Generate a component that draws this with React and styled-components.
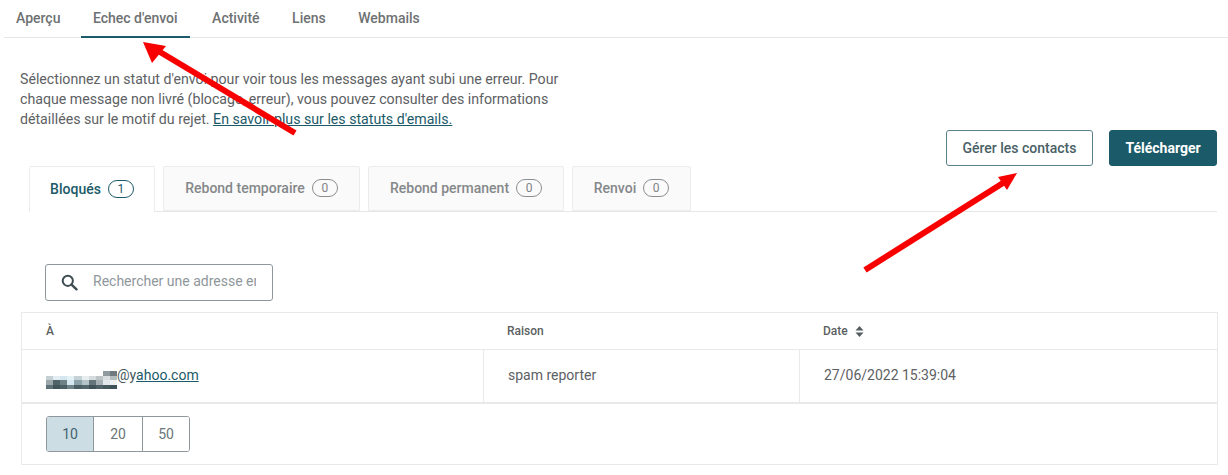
import React from 'react'
import styled, { createGlobalStyle } from 'styled-components'

const teal = '#1b5a68'

const GlobalStyle = createGlobalStyle`
    html, body {
        margin: 0;
        padding: 0;
        background: #fff;
    }
    body {
        font-family: Roboto, "Noto Sans", sans-serif;
        font-size: 14px;
        color: #5f6468;
    }
`

const navItems = ['Aperçu', "Echec d'envoi", 'Activité', 'Liens', 'Webmails']
const statusTabs = [
    { label: 'Bloqués', count: 1, width: 126 },
    { label: 'Rebond temporaire', count: 0, width: 197 },
    { label: 'Rebond permanent', count: 0, width: 196 },
    { label: 'Renvoi', count: 0, width: 119 },
]

// pixelated part of the address, [x, y, shade]
const mosaic = [
    [8, 0, '#8f9a9e'], [9, 0, '#6f7a80'],
    [0, 1, '#c4d0d4'], [1, 1, '#e2eef2'], [2, 1, '#d5e6ee'], [3, 1, '#e4f2f8'], [4, 1, '#c4d2d6'], [5, 1, '#e6eef0'], [6, 1, '#d6dcde'], [7, 1, '#bcc4c6'], [8, 1, '#d9dfe1'], [9, 1, '#b4bdc0'],
    [0, 2, '#9aa8ac'], [1, 2, '#4f6368'], [2, 2, '#6f8287'], [3, 2, '#d6e8f0'], [4, 2, '#8ba2a8'], [5, 2, '#b5c4c8'], [6, 2, '#64767b'], [7, 2, '#a6b0b4'], [8, 2, '#e2e8ea'], [9, 2, '#eef2f3'],
    [0, 3, '#5f7277'], [1, 3, '#3f555a'], [2, 3, '#4b6065'], [3, 3, '#6f8489'], [4, 3, '#4a5f64'], [5, 3, '#53686d'], [6, 3, '#3f5358'], [7, 3, '#4e6166'], [8, 3, '#45585d'], [9, 3, '#3f5257'],
]

function App() {
    return (
        <Page>
            <GlobalStyle />
            <Nav>
                {navItems.map((item, i) => (
                    <NavItem key={item} $active={i === 1}>{item}</NavItem>
                ))}
            </Nav>

            <Top>
                <Intro>
                    Sélectionnez un statut d'envoi pour voir tous les messages ayant subi une erreur. Pour
                    chaque message non livré (blocage, erreur), vous pouvez consulter des informations
                    détaillées sur le motif du rejet. <TextLink href="#">En savoir plus sur les statuts d'emails.</TextLink>
                </Intro>
                <Actions>
                    <OutlineButton>Gérer les contacts</OutlineButton>
                    <SolidButton>Télécharger</SolidButton>
                </Actions>
            </Top>

            <Tabs>
                {statusTabs.map((tab, i) => (
                    <Tab key={tab.label} $active={i === 0} $width={tab.width}>
                        {tab.label}
                        <Count $active={i === 0}>{tab.count}</Count>
                    </Tab>
                ))}
            </Tabs>

            <Search>
                <svg width="17" height="17" viewBox="0 0 18 18" fill="none" stroke="#3f4d52" strokeWidth="2.1">
                    <circle cx="7.2" cy="7.2" r="5.4" />
                    <path d="M11.2 11.2 L16.4 16.2" strokeLinecap="round" strokeWidth="2.6" />
                </svg>
                <SearchInput placeholder="Rechercher une adresse email" readOnly />
            </Search>

            <Table>
                <HeadRow>
                    <HeadCell>À</HeadCell>
                    <HeadCell>Raison</HeadCell>
                    <HeadCell>
                        Date
                        <svg width="9" height="11" viewBox="0 0 9 11" fill="#555d61">
                            <path d="M4.5 0 L8.5 4.4 H0.5 Z" />
                            <path d="M4.5 11 L8.5 6.6 H0.5 Z" />
                        </svg>
                    </HeadCell>
                </HeadRow>
                <BodyRow>
                    <BodyCell>
                        <Mosaic width="71" height="18" viewBox="0 0 10 4" preserveAspectRatio="none" shapeRendering="crispEdges">
                            {mosaic.map(([x, y, shade]) => (
                                <rect key={`${x}-${y}`} x={x} y={y} width="1" height="1" fill={shade} />
                            ))}
                        </Mosaic>
                        <Email>@y<EmailLink href="#">ahoo.com</EmailLink></Email>
                    </BodyCell>
                    <BodyCell>spam reporter</BodyCell>
                    <BodyCell>27/06/2022 15:39:04</BodyCell>
                </BodyRow>
                <Footer>
                    <Pager>
                        <PageButton $active $width={46}>10</PageButton>
                        <PageButton $width={49}>20</PageButton>
                        <PageButton $width={47}>50</PageButton>
                    </Pager>
                </Footer>
            </Table>

            {/* red annotation arrows drawn on top of the screenshot */}
            <Arrows width="1228" height="475" viewBox="0 0 1228 475">
                <path d="M295 133 L155 49" stroke="#f80000" strokeWidth="6" fill="none" />
                <path d="M143 42 L166 46 L152 63 Z" fill="#f80000" />
                <path d="M865 270 L1003 183" stroke="#f80000" strokeWidth="6" fill="none" />
                <path d="M1017 173 L998 177 L1007 190 Z" fill="#f80000" />
            </Arrows>
        </Page>
    )
}

export default App

const Page = styled.div`
    position: relative;
    width: 1228px;
    height: 475px;
    overflow: hidden;
    background: #fff;
`

const Nav = styled.nav`
    display: flex;
    gap: 8.5px;
    height: 38px;
    margin-left: 4px;
    box-sizing: border-box;
    border-bottom: 1px solid #e6e8e8;
`

const NavItem = styled.div`
    box-sizing: border-box;
    height: 38px;
    margin-right: ${(p) => (p.$active ? 2 : 0)}px;
    padding: 9px 12px 0;
    font-weight: 500;
    font-size: 14px;
    line-height: 18px;
    color: #6e7172;
    border-bottom: 2px solid ${(p) => (p.$active ? teal : 'transparent')};
`

const Top = styled.div`
    display: flex;
    align-items: flex-end;
    justify-content: space-between;
    height: 128px;
    padding: 0 11px 0 20px;
`

const Intro = styled.p`
    width: 550px;
    margin: 0 0 37px;
    font-size: 14.16px;
    line-height: 20px;
    color: #5d6163;
`

const TextLink = styled.a`
    color: ${teal};
    text-decoration: underline;
`

const Actions = styled.div`
    display: flex;
    gap: 16px;
`

const OutlineButton = styled.button`
    box-sizing: border-box;
    width: 147px;
    height: 36px;
    background: #fff;
    border: 1px solid #5b8089;
    border-radius: 3px;
    font: 500 14px Roboto, sans-serif;
    color: #4a5f66;
`

const SolidButton = styled.button`
    box-sizing: border-box;
    width: 108px;
    height: 36px;
    background: ${teal};
    border: 1px solid ${teal};
    border-radius: 3px;
    font: 700 14px Roboto, sans-serif;
    color: #fff;
`

const Tabs = styled.div`
    display: flex;
    gap: 8px;
    height: 46px;
    box-sizing: border-box;
    margin: 0 11px 0 29px;
    border-bottom: 1px solid #e6e8e8;
`

const Tab = styled.div`
    box-sizing: border-box;
    display: flex;
    align-items: center;
    justify-content: center;
    gap: 7px;
    width: ${(p) => p.$width}px;
    height: ${(p) => (p.$active ? 46 : 45)}px;
    padding-bottom: 1px;
    background: ${(p) => (p.$active ? '#fff' : '#fafafa')};
    border: 1px solid #ececec;
    border-bottom: ${(p) => (p.$active ? 'none' : '1px solid #ececec')};
    border-radius: 2px 2px 0 0;
    font-weight: 500;
    font-size: 14px;
    color: ${(p) => (p.$active ? teal : '#85888a')};
`

const Count = styled.span`
    box-sizing: border-box;
    width: 26px;
    height: 18px;
    border: 1px solid ${(p) => (p.$active ? teal : '#8b8e90')};
    border-radius: 9px;
    font-weight: 400;
    font-size: 12px;
    line-height: 16px;
    text-align: center;
    color: ${(p) => (p.$active ? teal : '#808385')};
`

const Search = styled.div`
    box-sizing: border-box;
    display: flex;
    align-items: center;
    gap: 15px;
    width: 228px;
    height: 37px;
    margin: 52px 0 0 45px;
    padding: 0 16px 3px 15px;
    border: 1px solid #8e979b;
    border-radius: 3px;
    & > svg {
        flex: none;
        margin-top: 3px;
    }
`

const SearchInput = styled.input`
    flex: 1;
    min-width: 0;
    border: none;
    outline: none;
    padding: 0;
    background: transparent;
    font: 400 14px Roboto, sans-serif;
    &::placeholder {
        color: #8f979b;
        opacity: 1;
    }
`

const Table = styled.div`
    box-sizing: border-box;
    width: 1197px;
    height: 153px;
    margin: 11px 0 0 21px;
    border: 1px solid #e8e9e9;
`

const columns = '461px 316px 1fr'

const HeadRow = styled.div`
    display: grid;
    grid-template-columns: ${columns};
    height: 37px;
    box-sizing: border-box;
    border-bottom: 1px solid #e8e9e9;
`

const HeadCell = styled.div`
    display: flex;
    align-items: center;
    gap: 7px;
    padding-left: 24px;
    font-weight: 500;
    font-size: 12px;
    color: #5c5f61;
`

const BodyRow = styled.div`
    display: grid;
    grid-template-columns: ${columns};
    height: 54px;
    box-sizing: border-box;
    border-bottom: 2px solid #e8e9e9;
`

const BodyCell = styled.div`
    display: flex;
    align-items: center;
    padding-left: 24px;
    padding-bottom: 3px;
    font-size: 14px;
    color: #5d6163;
    & + & {
        border-left: 1px solid #e8e9e9;
    }
`

const Mosaic = styled.svg`
    flex: none;
    margin-top: 10px;
`

const Email = styled.span`
    color: #45585e;
`

const EmailLink = styled.a`
    color: ${teal};
    text-decoration: underline;
`

const Footer = styled.div`
    padding: 12px 0 0 24px;
`

const Pager = styled.div`
    display: inline-flex;
    box-sizing: border-box;
    height: 36px;
    border: 1px solid #8e979b;
    border-radius: 3px;
    overflow: hidden;
`

const PageButton = styled.div`
    box-sizing: border-box;
    display: flex;
    align-items: center;
    justify-content: center;
    width: ${(p) => p.$width}px;
    background: ${(p) => (p.$active ? '#cddde4' : '#fff')};
    font-size: 14px;
    color: ${(p) => (p.$active ? '#3f6470' : '#6c7679')};
    & + & {
        border-left: 1px solid #8e979b;
    }
`

const Arrows = styled.svg`
    position: absolute;
    top: 0;
    left: 0;
    pointer-events: none;
`
